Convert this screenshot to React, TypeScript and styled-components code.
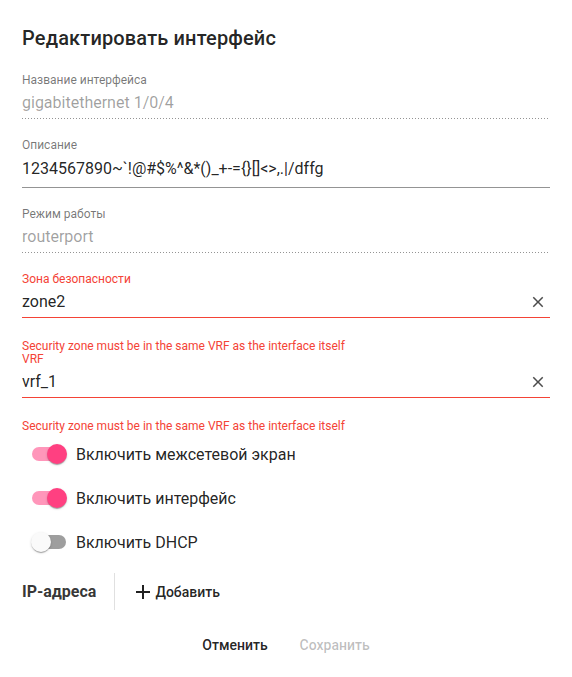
import React from 'react';
import styled, { createGlobalStyle } from 'styled-components';

const Global = createGlobalStyle`
  html, body { margin: 0; padding: 0; background: #fff; }
  body { font-family: Roboto, "Noto Sans", Arial, sans-serif; -webkit-font-smoothing: antialiased; }
`;

const RED = '#f44336';

const Dialog = styled.div`
  width: 572px;
  box-sizing: border-box;
  padding: 26px 22px 0 22px;
  display: flex;
  flex-direction: column;
`;

const Title = styled.h2`
  margin: 0;
  font-size: 20px;
  line-height: 24px;
  font-weight: 500;
  color: rgba(0, 0, 0, 0.87);
  letter-spacing: 0.15px;
`;

const Form = styled.div`
  display: flex;
  flex-direction: column;
  margin-top: 22px;
`;

const Field = styled.div<{ $gap?: number }>`
  display: flex;
  flex-direction: column;
  margin-top: ${(p) => p.$gap ?? 0}px;
`;

const Label = styled.label<{ $error?: boolean }>`
  font-size: 12px;
  line-height: 14px;
  color: ${(p) => (p.$error ? RED : 'rgba(0,0,0,0.54)')};
`;

type Variant = 'disabled' | 'normal' | 'error';

const InputRow = styled.div<{ $variant: Variant; $pt?: number; $pb?: number }>`
  display: flex;
  align-items: center;
  padding: ${(p) => p.$pt ?? 6}px 0 ${(p) => p.$pb ?? 6}px;
  ${(p) =>
    p.$variant === 'disabled'
      ? `border-bottom: 1px solid transparent;
         background-image: linear-gradient(to right, rgba(0,0,0,0.42) 1px, transparent 1px);
         background-size: 3px 1px;
         background-repeat: repeat-x;
         background-origin: border-box;
         background-position: left bottom;`
      : `border-bottom: 1px solid ${p.$variant === 'error' ? RED : 'rgba(0,0,0,0.42)'};`}
`;

const Value = styled.span<{ $disabled?: boolean }>`
  flex: 1;
  font-size: 16px;
  line-height: 19px;
  white-space: nowrap;
  color: ${(p) => (p.$disabled ? 'rgba(0,0,0,0.38)' : 'rgba(0,0,0,0.87)')};
`;

const ClearBtn = styled.span`
  display: flex;
  width: 18px;
  height: 18px;
  margin-right: 3px;
  color: rgba(0, 0, 0, 0.7);
`;

const Helper = styled.div<{ $gap: number }>`
  margin-top: ${(p) => p.$gap}px;
  font-size: 12px;
  line-height: 12px;
  color: ${RED};
`;

const Toggles = styled.div`
  display: flex;
  flex-direction: column;
`;

const ToggleRow = styled.label`
  display: flex;
  align-items: center;
  height: 44px;
`;

const Switch = styled.span<{ $on: boolean }>`
  position: relative;
  width: 36px;
  height: 20px;
  margin-left: 9px;
  margin-right: 9px;
  flex-shrink: 0;
  &::before {
    content: '';
    position: absolute;
    left: 1px;
    top: 3px;
    width: 34px;
    height: 14px;
    border-radius: 7px;
    background: ${(p) => (p.$on ? '#ff4081' : '#000')};
    opacity: ${(p) => (p.$on ? 0.55 : 0.38)};
  }
  &::after {
    content: '';
    position: absolute;
    top: 0;
    left: ${(p) => (p.$on ? 16 : 0)}px;
    width: 20px;
    height: 20px;
    border-radius: 50%;
    background: ${(p) => (p.$on ? '#ff4081' : '#fafafa')};
    box-shadow: 0px 2px 1px -1px rgba(0,0,0,0.2), 0px 1px 1px 0px rgba(0,0,0,0.14), 0px 1px 3px 0px rgba(0,0,0,0.12);
  }
`;

const ToggleText = styled.span`
  font-size: 16px;
  line-height: 19px;
  color: rgba(0, 0, 0, 0.87);
`;

const IpRow = styled.div`
  display: flex;
  align-items: center;
  height: 37px;
  margin-top: 9px;
`;

const IpTitle = styled.span`
  font-size: 16px;
  font-weight: 700;
  color: rgba(0, 0, 0, 0.8);
`;

const Divider = styled.span`
  width: 1px;
  align-self: stretch;
  background: #e0e0e0;
  margin: 0 21px 0 18px;
`;

const AddButton = styled.button`
  display: flex;
  align-items: center;
  gap: 5px;
  border: 0;
  background: none;
  padding: 0;
  font-family: inherit;
  font-size: 14px;
  font-weight: 500;
  color: rgba(0, 0, 0, 0.87);
  cursor: pointer;
`;

const Actions = styled.div`
  display: flex;
  justify-content: center;
  margin-top: 17px;
`;

const ActionButton = styled.button<{ $disabled?: boolean }>`
  height: 36px;
  padding: 0 16px;
  border: 0;
  background: none;
  font-family: inherit;
  font-size: 14px;
  font-weight: 500;
  color: ${(p) => (p.$disabled ? 'rgba(0,0,0,0.26)' : 'rgba(0,0,0,0.87)')};
  cursor: ${(p) => (p.$disabled ? 'default' : 'pointer')};
`;

const ClearIcon = () => (
  <svg width="18" height="18" viewBox="0 0 24 24" fill="currentColor">
    <path d="M19 6.41L17.59 5 12 10.59 6.41 5 5 6.41 10.59 12 5 17.59 6.41 19 12 13.41 17.59 19 19 17.59 13.41 12z" />
  </svg>
);

const PlusIcon = () => (
  <svg width="14" height="14" viewBox="0 0 14 14">
    <path d="M0 7H14M7 0V14" stroke="rgba(0,0,0,0.87)" strokeWidth="2" />
  </svg>
);

const DESCRIPTION = '1234567890~`!@#$%^&*()_+-={}[]<>,.|/dffg';

export default function App() {
  return (
    <>
      <Global />
      <Dialog>
        <Title>Редактировать интерфейс</Title>
        <Form>
          <Field $gap={1}>
            <Label>Название интерфейса</Label>
            <InputRow $variant="disabled">
              <Value $disabled>gigabitethernet 1/0/4</Value>
            </InputRow>
          </Field>
          <Field $gap={19}>
            <Label>Описание</Label>
            <InputRow $variant="normal" $pt={7} $pb={9}>
              <Value>{DESCRIPTION}</Value>
            </InputRow>
          </Field>
          <Field $gap={19}>
            <Label>Режим работы</Label>
            <InputRow $variant="disabled">
              <Value $disabled>routerport</Value>
            </InputRow>
          </Field>
          <Field $gap={19}>
            <Label $error>Зона безопасности</Label>
            <InputRow $variant="error">
              <Value>zone2</Value>
              <ClearBtn><ClearIcon /></ClearBtn>
            </InputRow>
            <Helper $gap={22}>Security zone must be in the same VRF as the interface itself</Helper>
          </Field>
          <Field>
            <Label $error>VRF</Label>
            <InputRow $variant="error">
              <Value>vrf_1</Value>
              <ClearBtn><ClearIcon /></ClearBtn>
            </InputRow>
            <Helper $gap={22}>Security zone must be in the same VRF as the interface itself</Helper>
          </Field>
        </Form>
        <Toggles>
          <ToggleRow>
            <Switch $on />
            <ToggleText>Включить межсетевой экран</ToggleText>
          </ToggleRow>
          <ToggleRow>
            <Switch $on />
            <ToggleText>Включить интерфейс</ToggleText>
          </ToggleRow>
          <ToggleRow>
            <Switch $on={false} />
            <ToggleText>Включить DHCP</ToggleText>
          </ToggleRow>
        </Toggles>
        <IpRow>
          <IpTitle>IP-адреса</IpTitle>
          <Divider />
          <AddButton>
            <PlusIcon />
            Добавить
          </AddButton>
        </IpRow>
        <Actions>
          <ActionButton>Отменить</ActionButton>
          <ActionButton $disabled>Сохранить</ActionButton>
        </Actions>
      </Dialog>
    </>
  );
}
